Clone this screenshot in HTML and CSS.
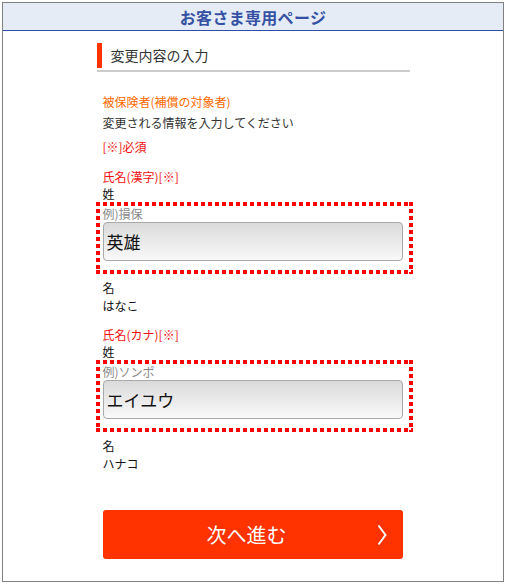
FILE: index.html
```html
<!DOCTYPE html>
<html lang="ja">
<head>
<meta charset="utf-8">
<title>お客さま専用ページ</title>
<link rel="stylesheet" href="styles.css">
</head>
<body>
<div class="frame">
  <header class="page-header">
    <h1 class="page-title">お客さま専用ページ</h1>
  </header>
  <main class="content">
    <div class="section-head">
      <h2 class="section-title">変更内容の入力</h2>
    </div>
    <div class="form">
      <p class="insured">被保険者(補償の対象者)</p>
      <p class="note">変更される情報を入力してください</p>
      <p class="required">[※]必須</p>

      <p class="field-title first">氏名(漢字)[※]</p>
      <p class="sub">姓</p>
      <div class="focus-box">
        <p class="example">例)損保</p>
        <div class="input">英雄</div>
      </div>
      <p class="sub after">名</p>
      <p class="value">はなこ</p>

      <p class="field-title">氏名(カナ)[※]</p>
      <p class="sub">姓</p>
      <div class="focus-box">
        <p class="example">例)ソンポ</p>
        <div class="input">エイユウ</div>
      </div>
      <p class="sub after">名</p>
      <p class="value">ハナコ</p>

      <button class="next" type="button">
        <span class="next-label">次へ進む</span>
        <svg class="chev" width="10" height="22" viewBox="0 0 10 22"><polyline points="1.5,1.5 8.5,11 1.5,20.5" fill="none" stroke="#fff" stroke-width="2"/></svg>
      </button>
    </div>
  </main>
</div>
</body>
</html>
```
FILE: styles.css
```css
* { box-sizing: border-box; }
html, body { margin: 0; padding: 0; background: #fff; }
body {
  padding: 2px 3px 0 2px;
  font-family: "Noto Sans CJK JP", "Noto Sans", sans-serif;
  color: #222;
}
p { margin: 0; }
.frame {
  width: 502px;
  height: 580px;
  border: 1px solid #808080;
  display: flex;
  flex-direction: column;
}
.page-header {
  height: 28px;
  background: #e5ecf6;
  border-bottom: 1px solid #2f4ea6;
  display: flex;
  align-items: center;
  justify-content: center;
}
.page-title {
  margin: 0;
  font-size: 16px;
  font-weight: bold;
  color: #3651a3;
  line-height: 20px;
  letter-spacing: 0.3px;
}
.content {
  width: 313px;
  margin: 12px auto 0;
}
.section-head {
  border-bottom: 2px solid #cccccc;
  padding-bottom: 2px;
}
.section-title {
  margin: 0;
  height: 25px;
  border-left: 5px solid #ff3300;
  padding-left: 9px;
  font-size: 14px;
  font-weight: normal;
  line-height: 25px;
  color: #333;
}
.form {
  padding-left: 6px;
  font-size: 12px;
}
.insured {
  margin-top: 21px;
  line-height: 18px;
  color: #ff6a00;
}
.note {
  margin-top: 3px;
  line-height: 18px;
  color: #333;
}
.required {
  margin-top: 6px;
  line-height: 18px;
  color: #f01010;
}
.field-title {
  margin-top: 12px;
  line-height: 18px;
  color: #f01010;
}
.sub {
  line-height: 16px;
  color: #111;
}
.sub.after {
  margin-top: 5px;
  line-height: 18px;
}
.value {
  line-height: 17px;
  color: #111;
}
.focus-box {
  margin-left: -7px;
  width: 317px;
  border: 4px solid transparent;
  padding: 0 6px 9px 3px;
  background:
    repeating-linear-gradient(90deg, #ff0000 0 4px, transparent 4px 7px) left top / 100% 4px no-repeat,
    repeating-linear-gradient(90deg, #ff0000 0 4px, transparent 4px 7px) left bottom / 100% 4px no-repeat,
    repeating-linear-gradient(180deg, #ff0000 0 4px, transparent 4px 7px) left top / 4px 100% no-repeat,
    repeating-linear-gradient(180deg, #ff0000 0 4px, transparent 4px 7px) right top / 4px 100% no-repeat;
  background-origin: border-box;
}
.example {
  line-height: 16px;
  color: #888;
}
.input {
  height: 39px;
  border: 1px solid #a9a9a9;
  border-radius: 4px;
  background: linear-gradient(#dadada, #f9f9f9);
  padding-left: 3px;
  font-size: 17px;
  line-height: 37px;
  color: #111;
}
.next {
  margin-top: 38px;
  width: 300px;
  height: 49px;
  border: none;
  border-radius: 3px;
  background: #ff3300;
  color: #fff;
  font-family: "Noto Sans CJK JP", "Noto Sans", sans-serif;
  font-size: 20px;
  display: flex;
  align-items: center;
  justify-content: center;
  position: relative;
  padding: 0 12px 0 0;
}
.next-label { line-height: 24px; }
.chev {
  position: absolute;
  right: 16px;
  top: 14px;
}
```
